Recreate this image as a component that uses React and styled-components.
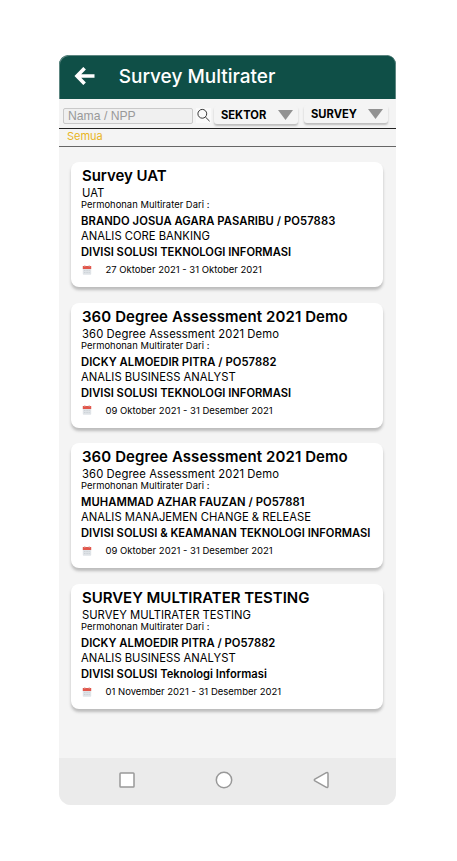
import React from "react";
import styled, { createGlobalStyle } from "styled-components";

const GlobalStyle = createGlobalStyle`
  * { box-sizing: border-box; }
  body { margin: 0; background: #fff; font-family: Inter, sans-serif; color: #000; }
`;

const Page = styled.div`
  height: 861px;
  padding: 55px 0 0 58.5px;
  overflow: hidden;
`;
const Phone = styled.main`
  width: 337.5px;
  height: 750px;
  display: flex;
  flex-direction: column;
  background: #f4f4f4;
  border-radius: 9px 9px 12px 12px;
  overflow: hidden;
`;
const Header = styled.header`
  height: 44px;
  flex: none;
  display: flex;
  align-items: center;
  background: #0f4f47;
  box-shadow: inset 1px 1px 0 #5d8681, inset -1px 0 0 #5d8681;
  border-radius: 9px 9px 0 0;
  padding: 0 0 2px 15px;
`;
const Title = styled.h1`
  margin: 1px 0 0 24.2px;
  font-size: 19px;
  line-height: 24px;
  font-weight: 500;
  color: #fff;
  white-space: nowrap;
`;
const Filters = styled.div`
  height: 29px;
  flex: none;
  display: flex;
  align-items: flex-start;
  padding: 5px 0 0 4.5px;
`;
const SearchInput = styled.input`
  width: 130px;
  height: 16px;
  margin-top: 4px;
  padding: 0 4px;
  border: 1px solid #c9c9c9;
  border-radius: 2px;
  background: #f0f0f0;
  font: 12.2px/14px "Liberation Sans", Arial, sans-serif;
  outline: none;
  &::placeholder { color: #999; opacity: 1; }
`;
const SearchButton = styled.span`
  width: 15px;
  height: 15px;
  display: flex;
  margin: 4px 0 0 3px;
  background: #fafafa;
`;
const Dropdown = styled.div`
  width: ${(p) => p.$width}px;
  height: 18px;
  margin: ${(p) => p.$top}px 0 0 ${(p) => p.$left}px;
  padding: 0 5px 0 7px;
  display: flex;
  align-items: center;
  justify-content: space-between;
  border-radius: 3px;
  background: #f4f4f4;
  box-shadow: 0 2px 2px #bdbdbd;
  font-size: 11.2px;
  font-weight: 700;
`;
const Tabs = styled.nav`
  height: 19px;
  flex: none;
  padding-left: 8.5px;
  border-top: 1px solid #222;
  border-bottom: 1px solid #666;
  color: #e9b424;
  font-size: 11px;
  line-height: 15px;
`;
const List = styled.section`
  flex: 1;
  display: flex;
  flex-direction: column;
  gap: 15.6px;
  padding: 15.2px 13px 0 12px;
`;
const Card = styled.article`
  height: 125px;
  flex: none;
  padding: 4.1px 0 0 10.5px;
  border-radius: 8px;
  background: #fff;
  box-shadow: 0 3px 3px #bcbcbc;
  white-space: nowrap;
`;
const CardTitle = styled.h2`
  margin: 0 0 0 1px;
  font-size: 15px;
  line-height: 20px;
  font-weight: 570;
  letter-spacing: ${(p) => p.$tracking}px;
`;
const Subtitle = styled.div`
  margin-left: 1px;
  font-size: 11.25px;
  line-height: 14px;
  letter-spacing: ${(p) => p.$tracking}px;
`;
const Caption = styled.div`
  font-size: 9.4px;
  line-height: 10px;
  letter-spacing: 0.03px;
`;
const Person = styled.div`
  margin-top: 3px;
  font-size: 11.25px;
  line-height: 16px;
  font-weight: 600;
  letter-spacing: ${(p) => p.$tracking}px;
`;
const Role = styled.div`
  font-size: 11.25px;
  line-height: 15px;
`;
const Division = styled.div`
  font-size: 11.2px;
  line-height: 16px;
  font-weight: 600;
`;
const DateRow = styled.div`
  height: 19px;
  display: flex;
  align-items: center;
  gap: 13.5px;
  padding-left: 1px;
  font-size: 9.5px;
  font-weight: 440;
`;
const SystemBar = styled.footer`
  height: 47px;
  flex: none;
  display: flex;
  align-items: center;
  gap: 79px;
  padding: 0 0 3px 59.5px;
  background: #ebebeb;
  svg { flex: none; }
`;

const BackIcon = () => (
  <svg width="21" height="18" viewBox="0 0 21 18" fill="none" stroke="#fff" strokeWidth="3.6">
    <path d="M10.6 1.2 3 9l7.6 7.8M3 9H20.5" />
  </svg>
);
const SearchIcon = () => (
  <svg width="15" height="15" viewBox="0 0 15 15" fill="none" stroke="#222" strokeWidth="0.9">
    <circle cx="6.3" cy="5.8" r="4.4" />
    <path d="m9.4 9 4.2 4.2" />
  </svg>
);
const Caret = () => (
  <svg width="15" height="10" viewBox="0 0 15 10">
    <path d="M0 0h15L7.5 10z" fill="#929292" />
  </svg>
);
const CalendarIcon = () => (
  <svg width="10" height="10" viewBox="0 0 10 10">
    <rect x="0.8" y="1" width="8.4" height="8.7" rx="0.8" fill="#dfe3e7" />
    <path d="M0.8 1h8.4v3H0.8z" fill="#e2574c" />
    <path d="M2.8 0v2M7.2 0v2" stroke="#d8a4a0" strokeWidth="0.8" />
    <path d="M2 5.5h6M2 7.5h6" stroke="#c8ced3" strokeWidth="0.8" strokeDasharray="1 .6" />
  </svg>
);

const surveys = [
  { title: "Survey UAT", sub: "UAT", titleTracking: -0.04, subTracking: 0, personTracking: 0.07, person: "BRANDO JOSUA AGARA PASARIBU / PO57883", role: "ANALIS CORE BANKING", division: "DIVISI SOLUSI TEKNOLOGI INFORMASI", date: "27 Oktober 2021 - 31 Oktober 2021" },
  { title: "360 Degree Assessment 2021 Demo", sub: "360 Degree Assessment 2021 Demo", titleTracking: 0.08, subTracking: 0.1, personTracking: 0.05, person: "DICKY ALMOEDIR PITRA / PO57882", role: "ANALIS BUSINESS ANALYST", division: "DIVISI SOLUSI TEKNOLOGI INFORMASI", date: "09 Oktober 2021 - 31 Desember 2021" },
  { title: "360 Degree Assessment 2021 Demo", sub: "360 Degree Assessment 2021 Demo", titleTracking: 0.08, subTracking: 0.1, personTracking: 0.06, person: "MUHAMMAD AZHAR FAUZAN / PO57881", role: "ANALIS MANAJEMEN CHANGE & RELEASE", division: "DIVISI SOLUSI & KEAMANAN TEKNOLOGI INFORMASI", date: "09 Oktober 2021 - 31 Desember 2021" },
  { title: "SURVEY MULTIRATER TESTING", sub: "SURVEY MULTIRATER TESTING", titleTracking: -0.03, subTracking: 0, personTracking: 0.01, person: "DICKY ALMOEDIR PITRA / PO57882", role: "ANALIS BUSINESS ANALYST", division: "DIVISI SOLUSI Teknologi Informasi", date: "01 November 2021 - 31 Desember 2021" },
];

export default function App() {
  return (
    <Page>
      <GlobalStyle />
      <Phone>
        <Header>
          <BackIcon />
          <Title>Survey Multirater</Title>
        </Header>
        <Filters>
          <SearchInput placeholder="Nama / NPP" />
          <SearchButton><SearchIcon /></SearchButton>
          <Dropdown $width={84} $left={3} $top={2}>SEKTOR <Caret /></Dropdown>
          <Dropdown $width={84} $left={6} $top={1}>SURVEY <Caret /></Dropdown>
        </Filters>
        <Tabs>Semua</Tabs>
        <List>
          {surveys.map((s, i) => (
            <Card key={i}>
              <CardTitle $tracking={s.titleTracking}>{s.title}</CardTitle>
              <Subtitle $tracking={s.subTracking}>{s.sub}</Subtitle>
              <Caption>Permohonan Multirater Dari :</Caption>
              <Person $tracking={s.personTracking}>{s.person}</Person>
              <Role>{s.role}</Role>
              <Division>{s.division}</Division>
              <DateRow><CalendarIcon />{s.date}</DateRow>
            </Card>
          ))}
        </List>
        <SystemBar>
          <svg width="18" height="18" viewBox="0 0 18 18" fill="#fff" stroke="#999" strokeWidth="1.5"><rect x="2" y="2" width="14" height="14" rx="0.8" /></svg>
          <svg width="18" height="18" viewBox="0 0 18 18" fill="#fff" stroke="#999" strokeWidth="1.5"><circle cx="9" cy="9" r="7.7" /></svg>
          <svg width="18" height="18" viewBox="0 0 18 18" fill="#fff" stroke="#999" strokeWidth="1.5" strokeLinejoin="round"><path d="M2.9 8.1 14.4 1.7q1.6-.5 1.6 1v12.6q0 1.5-1.6 1L2.9 9.9q-1.2-.9 0-1.8z" /></svg>
        </SystemBar>
      </Phone>
    </Page>
  );
}
